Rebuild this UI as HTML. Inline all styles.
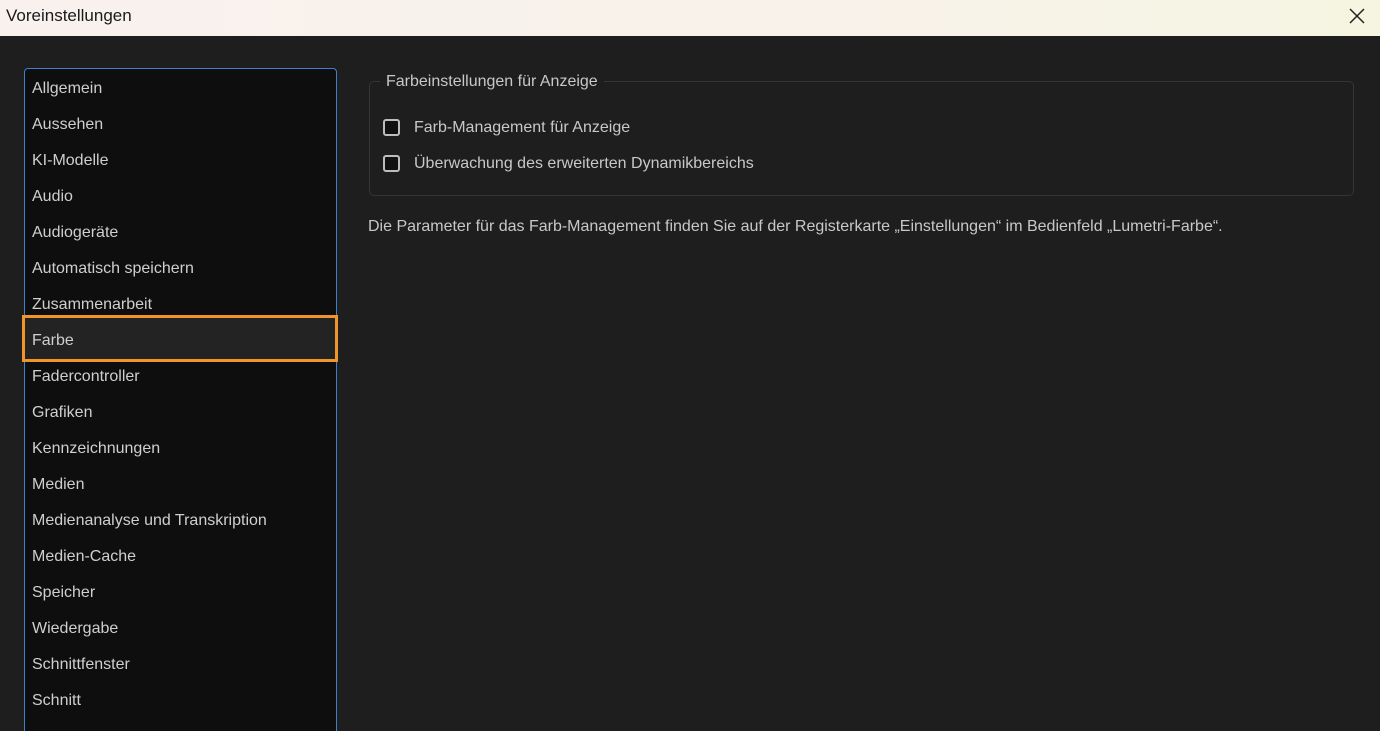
<!DOCTYPE html>
<html><head><style>
html,body{margin:0;width:1380px;height:731px;overflow:hidden}
body{background:#1e1e1e;font-family:"Liberation Sans",sans-serif;position:relative}
.title{position:absolute;left:0;top:0;width:1380px;height:36px;background:linear-gradient(90deg,#f9f1ee,#f8f2ea 60%,#f5f5e2);}
.title span{position:absolute;left:6px;top:6px;font-size:17px;color:#1a1a1a}
.x{position:absolute;right:14px;top:7px}
.list{position:absolute;left:24px;top:68px;width:311px;height:670px;background:#0e0e0e;border:1px solid #3f7fcf;border-radius:4px}
.it{position:absolute;left:32px;font-size:16px;color:#cfcfcf;line-height:20px}
.sel{position:absolute;left:22px;top:315px;width:310px;height:41px;border:3px solid #f0952a;background:#232323}
.grp{position:absolute;left:369px;top:81px;width:983px;height:113px;border:1px solid #353535;border-radius:5px}
.leg{position:absolute;left:380px;top:72px;padding:0 6px;background:#1e1e1e;color:#c8c8c8;font-size:16px}
.cb{position:absolute;left:383px;width:13px;height:13px;border:2px solid #bdbdbd;border-radius:3px;background:#111}
.t{position:absolute;color:#c8c8c8;font-size:16px}
</style></head><body>
<div class="title"><span>Voreinstellungen</span>
<svg class="x" width="18" height="18" viewBox="0 0 18 18"><path d="M2 2L16 16M16 2L2 16" stroke="#222" stroke-width="1.5"/></svg></div>
<div class="list"></div>
<div class="sel"></div>
<div class="it" style="top:79px">Allgemein</div>
<div class="it" style="top:115px">Aussehen</div>
<div class="it" style="top:151px">KI-Modelle</div>
<div class="it" style="top:187px">Audio</div>
<div class="it" style="top:223px">Audiogeräte</div>
<div class="it" style="top:259px">Automatisch speichern</div>
<div class="it" style="top:295px">Zusammenarbeit</div>
<div class="it" style="top:331px">Farbe</div>
<div class="it" style="top:367px">Fadercontroller</div>
<div class="it" style="top:403px">Grafiken</div>
<div class="it" style="top:439px">Kennzeichnungen</div>
<div class="it" style="top:475px">Medien</div>
<div class="it" style="top:511px">Medienanalyse und Transkription</div>
<div class="it" style="top:547px">Medien-Cache</div>
<div class="it" style="top:583px">Speicher</div>
<div class="it" style="top:619px">Wiedergabe</div>
<div class="it" style="top:655px">Schnittfenster</div>
<div class="it" style="top:691px">Schnitt</div>
<div class="grp"></div>
<div class="leg" style="top:73px">Farbeinstellungen für Anzeige</div>
<div class="cb" style="top:119px"></div>
<div class="t" style="left:414px;top:119px">Farb-Management für Anzeige</div>
<div class="cb" style="top:155px"></div>
<div class="t" style="left:414px;top:155px">Überwachung des erweiterten Dynamikbereichs</div>
<div class="t" style="left:368px;top:218px">Die Parameter für das Farb-Management finden Sie auf der Registerkarte „Einstellungen“ im Bedienfeld „Lumetri-Farbe“.</div>
</body></html>
